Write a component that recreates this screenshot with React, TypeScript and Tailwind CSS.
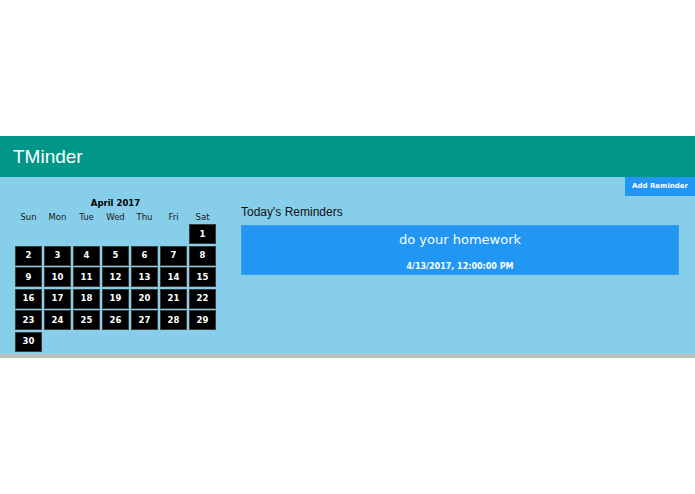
const days = ['Sun', 'Mon', 'Tue', 'Wed', 'Thu', 'Fri', 'Sat']

// April 2017 starts on a Saturday
const cells: (number | null)[] = [
  ...Array(6).fill(null),
  ...Array.from({ length: 30 }, (_, i) => i + 1),
]

const verdana = "font-['Verdana','DejaVu_Sans',sans-serif]"

function Calendar() {
  return (
    <div className={`w-[201px] ${verdana}`}>
      <div className="text-center text-[8.5px] font-bold text-black leading-[10px] mb-[4px]">April 2017</div>
      <div className="grid grid-cols-[repeat(7,27px)] gap-x-[2px] mb-[2px]">
        {days.map(d => (
          <div key={d} className="text-center text-[8.5px] text-[#1a1a1a] leading-[10px]">{d}</div>
        ))}
      </div>
      <div className="grid grid-cols-[repeat(7,27px)] gap-x-[2px] gap-y-[1.5px]">
        {cells.map((n, i) =>
          n === null ? (
            <div key={i} className="h-[20px]" />
          ) : (
            <div
              key={i}
              className="h-[20px] bg-black border border-[#3a3a3a] flex items-center justify-center text-white text-[8.5px] font-bold"
            >
              {n}
            </div>
          )
        )}
      </div>
    </div>
  )
}

export default function App() {
  return (
    <div className="w-full">
      <div className="h-[136px] bg-white" />
      <header className="h-[41px] bg-[#009688] flex items-center pl-[13px]">
        <h1 className="text-white text-[19px] font-['Liberation_Sans',Arial,sans-serif] leading-none">TMinder</h1>
      </header>
      <main className="bg-[#87ceeb] h-[177px]">
        <div className="flex justify-end">
          <button className={`h-[19px] px-[7px] bg-[#2196f3] text-white text-[7px] font-bold ${verdana}`}>
            Add Reminder
          </button>
        </div>
        <div className="flex pl-[15px] pr-[16px] pt-[2px]">
          <Calendar />
          <section className="flex-1 ml-[25px]">
            <h2 className="text-[12px] text-[#111] font-['Liberation_Sans',Arial,sans-serif] leading-[14px] mt-[7px] mb-[6px]">
              Today's Reminders
            </h2>
            <div className={`h-[50px] bg-[#2196f3] border border-[#3e9be6] flex flex-col items-center text-white ${verdana}`}>
              <div className="text-[13px] leading-[16px] mt-[6px]">do your homework</div>
              <div className="text-[8px] font-bold leading-[10px] mt-[14px]">4/13/2017, 12:00:00 PM</div>
            </div>
          </section>
        </div>
      </main>
      <div className="h-[4px] bg-[#bdbdbd]" />
    </div>
  )
}
